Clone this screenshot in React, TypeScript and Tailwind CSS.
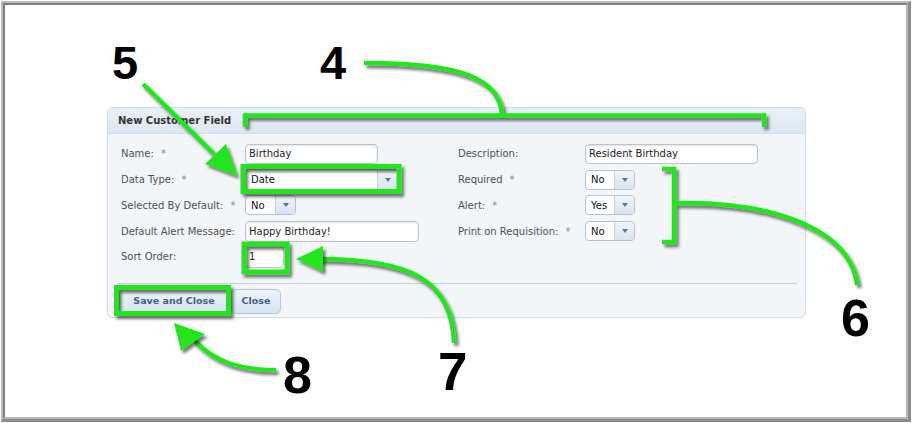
import React from "react";

const Req = () => <span className="ml-[7px] text-[#888]">*</span>;

function Label({ children, req }: { children: React.ReactNode; req?: boolean }) {
  return (
    <div className="text-[10px] text-[#505050] whitespace-nowrap flex items-center">
      <span>{children}</span>
      {req && <Req />}
    </div>
  );
}

function TextInput({ value, w, h = 20 }: { value: string; w: number; h?: number }) {
  return (
    <div
      className="bg-white border border-[#b7c3cf] rounded-[4px] flex items-center pl-[3px] text-[10px] text-[#222] shadow-[inset_0_1px_2px_rgba(0,0,0,0.12)]"
      style={{ width: w, height: h }}
    >
      {value}
    </div>
  );
}

function Select({ value, w, h = 20 }: { value: string; w: number; h?: number }) {
  return (
    <div
      className="bg-white border border-[#b3c3d4] rounded-[4px] flex overflow-hidden text-[10px] text-[#111]"
      style={{ width: w, height: h }}
    >
      <div className="flex-1 flex items-center pl-[5px]">{value}</div>
      <div className="w-[20px] border-l border-[#c3d2e2] bg-gradient-to-b from-[#f0f5fa] to-[#d8e4f0] flex items-center justify-center">
        <div className="w-0 h-0 border-l-[3.5px] border-r-[3.5px] border-t-[4px] border-l-transparent border-r-transparent border-t-[#56799f]" />
      </div>
    </div>
  );
}

function Annotations() {
  const g = "#22e61e";
  return (
    <svg className="absolute left-0 top-0 pointer-events-none" width={912} height={423} viewBox="0 0 912 423">
      <defs>
        <filter id="sh" x="-20%" y="-20%" width="140%" height="140%">
          <feDropShadow dx="2.5" dy="3" stdDeviation="1.6" floodColor="#000" floodOpacity="0.55" />
        </filter>
      </defs>
      <g filter="url(#sh)" fill="none" stroke={g} strokeWidth={4.5} strokeLinecap="butt" strokeLinejoin="miter">
        <path d="M364,63 C460,63 500,78 502,115" />
        <path d="M245,127 V115.5 H764 V127" />
        <path d="M143,84 L214,154" />
        <rect x="243" y="166.5" width="156" height="25" strokeWidth={5} />
        <path d="M662,169 H674 V242 H662" />
        <path d="M676,203 C770,201 850,228 857,285" />
        <rect x="244" y="244" width="43" height="28" strokeWidth={5} />
        <path d="M320,259 C410,259 452,280 454,343" />
        <rect x="116.5" y="287.5" width="112" height="26" strokeWidth={5} />
        <path d="M194,340 C214,362 240,370 276,370" />
      </g>
      <g filter="url(#sh)" fill={g} stroke="none">
        <polygon points="237,176 205,164 226,144" />
        <polygon points="296,259 323,246 323,272" />
        <polygon points="174,323 181,351 205,334" />
      </g>
    </svg>
  );
}

export default function App() {
  const num = "absolute font-['Liberation_Sans',Arial,sans-serif] font-bold text-black leading-none";
  return (
    <div className="w-[912px] h-[423px] bg-white p-[1px] relative overflow-hidden font-['DejaVu_Sans',sans-serif]">
      <div className="h-full border-t-2 border-l-2 border-t-[#bbbbbb] border-l-[#bbbbbb] border-r-[3px] border-b-[3px] border-r-[#8c8c8c] border-b-[#8c8c8c]">
        <div className="h-full border-t-2 border-l-2 border-t-[#7f7f7f] border-l-[#7f7f7f] border-r-2 border-b-2 border-r-[#b8b8b8] border-b-[#b8b8b8] bg-white pl-[102px] pt-[102px]">
          <div className="w-[699px] h-[211px] rounded-[6px] border border-[#d3dde8] bg-[#f3f6f9] overflow-hidden shadow-[0_0_2px_rgba(0,0,0,0.08)]">
            <div className="h-[26px] bg-gradient-to-b from-[#e9f0f7] to-[#dde7f2] border-b border-[#d3dfea] pl-[10px] flex items-center text-[10px] font-bold text-[#333]">
              New Customer Field
            </div>
            <div className="pt-[7px] pl-[13px] grid grid-cols-[124px_213px_127px_1fr] auto-rows-[25.75px] items-center">
              <Label req>Name:</Label>
              <TextInput value="Birthday" w={133} />
              <Label>Description:</Label>
              <TextInput value="Resident Birthday" w={173} />

              <Label req>Data Type:</Label>
              <Select value="Date" w={153} h={22} />
              <Label req>Required</Label>
              <Select value="No" w={50} />

              <Label req>Selected By Default:</Label>
              <Select value="No" w={51} />
              <Label req>Alert:</Label>
              <Select value="Yes" w={50} />

              <Label>Default Alert Message:</Label>
              <TextInput value="Happy Birthday!" w={174} h={21} />
              <Label req>Print on Requisition:</Label>
              <Select value="No" w={50} />

              <Label>Sort Order:</Label>
              <TextInput value="1" w={39} h={22} />
              <div />
              <div />
            </div>
            <div className="mt-[13px] mx-[8px] h-px bg-[#c3d4e6]" />
            <div className="pl-[11px] pt-[5px] flex gap-[2px]">
              <button className="h-[25px] w-[110px] rounded-[5px] border border-[#b3c8dd] bg-gradient-to-b from-[#eef4fa] to-[#d6e3f0] text-[9.5px] font-bold text-[#3e6089]">
                Save and Close
              </button>
              <button className="h-[25px] w-[50px] rounded-[5px] border border-[#b3c8dd] bg-gradient-to-b from-[#eef4fa] to-[#d6e3f0] text-[9.5px] font-bold text-[#3e6089]">
                Close
              </button>
            </div>
          </div>
        </div>
      </div>
      <Annotations />
      <div className={`${num} left-[112px] top-[39px] text-[47px]`}>5</div>
      <div className={`${num} left-[320px] top-[39px] text-[47px]`}>4</div>
      <div className={`${num} left-[841px] top-[292px] text-[52px]`}>6</div>
      <div className={`${num} left-[438px] top-[345px] text-[53px]`}>7</div>
      <div className={`${num} left-[283px] top-[349px] text-[52px]`}>8</div>
    </div>
  );
}
